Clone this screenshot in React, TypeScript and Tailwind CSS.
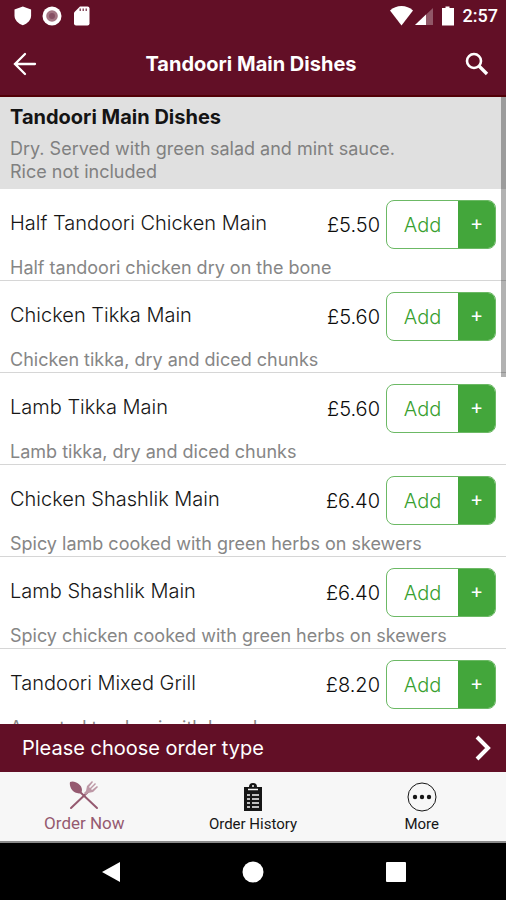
const dishes = [
  { name: "Half Tandoori Chicken Main", price: "£5.50", description: "Half tandoori chicken dry on the bone" },
  { name: "Chicken Tikka Main", price: "£5.60", description: "Chicken tikka, dry and diced chunks" },
  { name: "Lamb Tikka Main", price: "£5.60", description: "Lamb tikka, dry and diced chunks" },
  { name: "Chicken Shashlik Main", price: "£6.40", description: "Spicy lamb cooked with green herbs on skewers" },
  { name: "Lamb Shashlik Main", price: "£6.40", description: "Spicy chicken cooked with green herbs on skewers" },
  { name: "Tandoori Mixed Grill", price: "£8.20", description: "Assorted tandoori with bread" },
];

function StatusBar() {
  return (
    <div className="flex h-8 shrink-0 items-center justify-between pl-3 pr-2 text-white">
      <div className="flex items-center gap-2">
        <svg className="size-[22px]" viewBox="0 0 22 22" fill="currentColor" aria-hidden="true">
          <path d="M10.800 1.500 2.500 4.500v6c0 4.500 3.500 8 8.300 9.800 4.800-1.800 8.300-5.300 8.300-9.800v-6Z" />
        </svg>
        <svg className="size-[22px]" viewBox="0 0 22 22" aria-hidden="true">
          <circle cx="10" cy="11" r="9.500" fill="#fff" />
          <circle cx="10" cy="11" r="5.800" fill="#a37583" />
          <circle cx="10" cy="11" r="3" fill="#875064" />
        </svg>
        <svg className="size-[22px]" viewBox="0 0 22 22" aria-hidden="true">
          <path fill="#fff" d="M8 1.500h7.500q2 0 2 2v15q0 2-2 2H4q-2 0-2-2V7.500Z" />
          <path fill="#8a5062" d="M7.500 3.500H9v2.500H7.500zM10.500 3.500H12v2.500h-1.500zM13.500 3.500H15v2.500h-1.500z" />
        </svg>
      </div>
      <div className="flex items-center">
        <svg className="h-[22px] w-[68px]" viewBox="0 0 68 22" fill="currentColor" aria-hidden="true">
          <path d="M3 5.500C9-.5 20-.5 26 5.500L14.500 20.500Z" />
          <path d="M46 3v17H28Z" opacity=".3" />
          <path d="M39 9.500V20H28Z" />
          <path d="M58.500 1.500h4V3H67v17.500H55V3h3.500Z" />
        </svg>
        <span className="ml-2 font-[Roboto] text-lg leading-6 font-medium">2:57</span>
      </div>
    </div>
  );
}

function Header() {
  return (
    <header className="flex h-[65px] shrink-0 items-center justify-between border-b-2 border-[#520007] px-3 text-white">
      <button type="button" aria-label="Back">
        <svg className="size-7" viewBox="0 0 28 28" fill="none" stroke="currentColor" strokeWidth="2.300" strokeLinecap="round">
          <path d="M23 14H3M13 4 3 14l10 10" />
        </svg>
      </button>
      <h1 className="text-xl font-bold">Tandoori Main Dishes</h1>
      <button type="button" aria-label="Search">
        <svg className="size-8" viewBox="0 0 32 32" fill="none" stroke="currentColor">
          <circle cx="12" cy="13" r="7" strokeWidth="2.600" />
          <path d="m17 18 8 8" strokeWidth="3.400" />
        </svg>
      </button>
    </header>
  );
}

function DishRow({ name, price, description }: { name: string; price: string; description: string }) {
  return (
    <li className="h-[92px] border-b border-[#d6d6d6] px-[10px] pt-[11px]">
      <div className="flex items-center">
        <h3 className="min-w-0 flex-1 pb-1 text-xl font-light text-[#161616]">{name}</h3>
        <span className="pr-[6px] text-xl font-light text-[#0c0c0c]">{price}</span>
        <button
          type="button"
          aria-label={`Add ${name}`}
          className="flex h-[49px] w-[110px] overflow-hidden rounded-lg border border-[#6cb965]"
        >
          <span className="flex flex-1 items-center justify-center text-xl font-light text-[#38a02f]">Add</span>
          <span className="flex w-[37px] items-center justify-center bg-[#43a63b] pb-1 text-xl text-white">+</span>
        </button>
      </div>
      <p className="mt-[7px] text-lg leading-6 whitespace-nowrap text-[#868686]">{description}</p>
    </li>
  );
}

function TabBar() {
  return (
    <nav className="grid h-[71px] shrink-0 grid-cols-3 border-b-2 border-[#8b8b8b] bg-[#f7f7f7] font-[Roboto] text-[#161616]">
      <a href="#order" className="flex flex-col items-center pt-2 text-[#955a70]">
        <svg className="size-8" viewBox="0 0 32 32" aria-hidden="true">
          <g fill="none" stroke="currentColor" strokeLinecap="round">
            <path d="m11 11 18 17" strokeWidth="2" />
            <path d="M22 10 3 28" strokeWidth="2" />
          </g>
          <path fill="currentColor" d="M2 2c4-2 12 2 12 8 0 3-2 4-5 3C4 12 1 6 2 2Z" />
          <path fill="#bd98a6" d="m18 11 1-5 5-5 1 1-4 5 1 1 5-5 1 1-5 5 1 1 5-4 1 1-5 5-5 1-2 2-2-2Z" />
        </svg>
        <span className="text-[17px] leading-[22px]">Order Now</span>
      </a>
      <a href="#history" className="flex flex-col items-center pt-[10px]">
        <svg className="size-8" viewBox="0 0 32 32" aria-hidden="true">
          <path fill="currentColor" d="M7 5h5q0-4 4-4t4 4h5v24H7Z" />
          <path stroke="#f7f7f7" strokeWidth="1.500" fill="none" d="M11 7.500h10M10 13h3M15 13h7M10 17h3M15 17h7M10 21h3M15 21h7M10 25h3M15 25h7" />
          <circle cx="16" cy="4" r="1" fill="#f7f7f7" />
        </svg>
        <span className="text-[15px] leading-5">Order History</span>
      </a>
      <a href="#more" className="flex flex-col items-center pt-[10px]">
        <svg className="size-8" viewBox="0 0 32 32" aria-hidden="true">
          <circle cx="16" cy="15" r="14" fill="none" stroke="currentColor" />
          <g fill="currentColor">
            <circle cx="9" cy="15" r="2.200" />
            <circle cx="16" cy="15" r="2.200" />
            <circle cx="23" cy="15" r="2.200" />
          </g>
        </svg>
        <span className="text-[15px] leading-5">More</span>
      </a>
    </nav>
  );
}

function SystemNav() {
  return (
    <div className="flex h-[57px] shrink-0 items-center justify-center gap-[120px] bg-black text-white">
      <button type="button" aria-label="System back">
        <svg className="size-[22px]" viewBox="0 0 22 22" fill="currentColor"><path d="M20 1v20L2 11Z" /></svg>
      </button>
      <button type="button" aria-label="Home">
        <svg className="size-[22px]" viewBox="0 0 22 22" fill="currentColor"><circle cx="11" cy="11" r="10.500" /></svg>
      </button>
      <button type="button" aria-label="Recent apps">
        <svg className="size-[22px]" viewBox="0 0 22 22" fill="currentColor"><rect x="2" y="1" width="20" height="20" rx="1" /></svg>
      </button>
    </div>
  );
}

export default function App() {
  return (
    <div className="flex h-screen flex-col bg-[#620f26] font-[Inter,sans-serif]">
      <StatusBar />
      <Header />
      <main className="relative min-h-0 flex-1 overflow-hidden bg-white">
        <section className="h-[92px] bg-[#e0e0e0] px-[10px] pt-[6px]">
          <h2 className="text-xl font-bold text-[#141414]">Tandoori Main Dishes</h2>
          <p className="mt-[6px] text-lg leading-[23px] text-[#808080]">
            Dry. Served with green salad and mint sauce.
            <br />
            Rice not included
          </p>
        </section>
        <ul>
          {dishes.map((dish) => (
            <DishRow key={dish.name} {...dish} />
          ))}
        </ul>
        <div className="absolute top-0 right-0 h-[280px] w-[5px] bg-black/30" />
      </main>
      <button type="button" className="flex h-12 shrink-0 items-center justify-between pr-[14px] pl-[22px] text-white">
        <span className="text-xl">Please choose order type</span>
        <svg className="h-7 w-[18px]" viewBox="0 0 18 28" fill="none" stroke="currentColor" strokeWidth="4" aria-hidden="true">
          <path d="m3 3 11 11L3 25" />
        </svg>
      </button>
      <TabBar />
      <SystemNav />
    </div>
  );
}
